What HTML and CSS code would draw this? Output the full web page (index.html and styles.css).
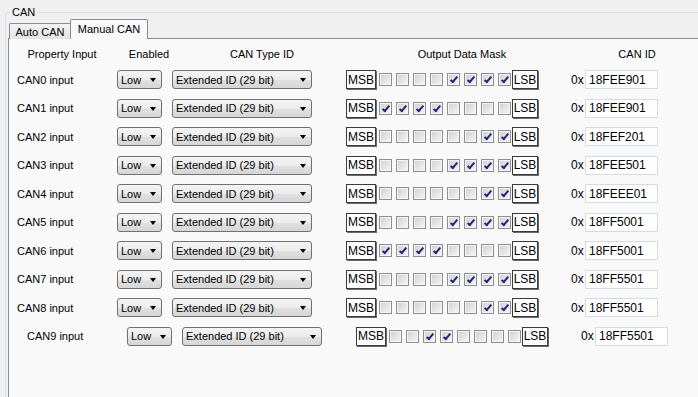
FILE: index.html
```html
<!DOCTYPE html>
<html>
	<head>
		<meta charset="utf-8">
		<title>CAN</title>
		<link rel="stylesheet" href="styles.css">
	</head>
	<body>
		<fieldset class="group">
			<legend>CAN</legend>
			<div class="tabs">
				<span class="tab">Auto CAN</span>
				<span class="tab active">Manual CAN</span>
			</div>
			<div class="panel">
				<div class="head">
					<span class="h-prop">Property Input</span>
					<span class="h-en">Enabled</span>
					<span class="h-type">CAN Type ID</span>
					<span class="h-mask">Output Data Mask</span>
					<span class="h-id">CAN ID</span>
				</div>
				<div id="rows"></div>
			</div>
		</fieldset>
		<script>
			// one row per CAN input: mask bits (MSB first) and the id
			var data = [
				["00001111", "18FEE901"],
				["11110000", "18FEE901"],
				["00000011", "18FEF201"],
				["00001111", "18FEE501"],
				["00000011", "18FEEE01"],
				["00001111", "18FF5001"],
				["11110000", "18FF5001"],
				["00001111", "18FF5501"],
				["00000011", "18FF5501"],
				["00110000", "18FF5501"]
			];
			var html = "";
			for (var i = 0; i < data.length; i++) {
				var bits = "";
				for (var b = 0; b < 8; b++) {
					bits += '<span class="cb' + (data[i][0][b] == "1" ? " on" : "") + '"></span>';
				}
				html += '<div class="row' + (i == 9 ? " shifted" : "") + '">' +
					'<span class="name">CAN' + i + ' input</span>' +
					'<span class="combo low">Low<i></i></span>' +
					'<span class="combo ext">Extended ID (29 bit)<i></i></span>' +
					'<span class="tag msb">MSB</span>' +
					'<span class="bits">' + bits + '</span>' +
					'<span class="tag lsb">LSB</span>' +
					'<span class="hex">0x</span>' +
					'<span class="textbox">' + data[i][1] + '</span>' +
					'</div>';
			}
			document.getElementById("rows").innerHTML = html;
		</script>
	</body>
</html>
```
FILE: styles.css
```css
body, html{
	margin: 0;
	background-color: #f0f0f0;
	overflow: hidden;
}
body{
	font-family: "Liberation Sans", Arial, sans-serif;
	font-size: 11px;
	color: #000;
	width: 698px;
	height: 397px;
}
.group{
	box-sizing: border-box;
	margin: 5px 0 0 5px;
	padding: 0 0 0 2px;
	border: 1px solid #d5dfe5;
	border-right: none;
	border-bottom: none;
	border-radius: 3px 0 0 0;
	width: 693px;
	height: 392px;
	min-width: 0;
}
.group legend{
	margin-left: 2px;
	padding: 0 2px;
	line-height: 14px;
}
.tabs{
	display: flex;
	align-items: flex-end;
	margin-top: 1px;
	padding-left: 1px;
	height: 19px;
	margin-bottom: -1px;
}
.tab{
	display: flex;
	align-items: center;
	justify-content: center;
	box-sizing: border-box;
	width: 61px;
	height: 16px;
	border: 1px solid #898c95;
	border-bottom: none;
	border-right: none;
	border-radius: 2px 0 0 0;
	background: linear-gradient(#f3f3f3, #e4e4e4);
}
.tab.active{
	width: 78px;
	height: 20px;
	border-right: 1px solid #898c95;
	border-radius: 2px 2px 0 0;
	background: #f9f9f9;
	position: relative;
	z-index: 1;
	padding-bottom: 1px;
}
.panel{
	border: 1px solid #898c95;
	border-right: none;
	border-bottom: none;
	background-color: #f9f9f9;
	height: 358px;
}
.head{
	display: flex;
	margin: 7px 0 0 3px;
	line-height: 16px;
	text-align: center;
}
.h-prop{ width: 100px; }
.h-en{ width: 74px; }
.h-type{ width: 152px; }
.h-mask{ width: 248px; }
.h-id{ width: 102px; }
#rows{
	margin-top: 8px;
}
.row{
	display: flex;
	align-items: flex-start;
	height: 28.5px;
	padding-left: 8px;
}
.row.shifted{
	padding-left: 18px;
}
.row > span{
	display: flex;
	align-items: center;
	box-sizing: border-box;
	height: 19px;
}
.name{
	width: 100px;
}
.combo{
	border: 1px solid #707070;
	border-radius: 3px;
	background: linear-gradient(#f4f4f4 0%, #ececec 50%, #e0e0e0 52%, #d6d6d6 100%);
	padding-left: 3px;
	position: relative;
}
.combo i{
	position: absolute;
	right: 5px;
	top: 7px;
	width: 0;
	height: 0;
	border-top: 4px solid #000;
	border-left: 3px solid transparent;
	border-right: 3px solid transparent;
}
.low{
	width: 45px;
	margin-right: 10px;
}
.ext{
	width: 140px;
	margin-right: 34px;
}
.tag{
	justify-content: center;
	background: #fff;
	border: 1px solid #3a3a3a;
	box-shadow: 1px 1px 0 #6a6a6a;
	font-size: 12px;
}
.msb{
	width: 30px;
}
.lsb{
	width: 26px;
	margin-left: 1px;
}
.bits{
	gap: 4px;
	margin-left: 3px;
}
.cb{
	box-sizing: border-box;
	width: 13px;
	height: 13px;
	border: 1px solid #8e8f8f;
	box-shadow: inset 0 0 0 1px #f4f4f4;
	background: linear-gradient(135deg, #cfcfcf, #f7f7f7);
	position: relative;
}
.cb.on::after{
	content: "";
	position: absolute;
	left: 4px;
	top: 1px;
	width: 2px;
	height: 6px;
	border-right: 2px solid #23237a;
	border-bottom: 2px solid #23237a;
	transform: rotate(40deg);
}
.hex{
	margin-left: 33px;
	width: 14px;
	font-size: 12px;
}
.textbox{
	width: 73px;
	background: #fff;
	border: 1px solid #d5dbe2;
	padding-left: 3px;
	font-size: 12px;
}
```
